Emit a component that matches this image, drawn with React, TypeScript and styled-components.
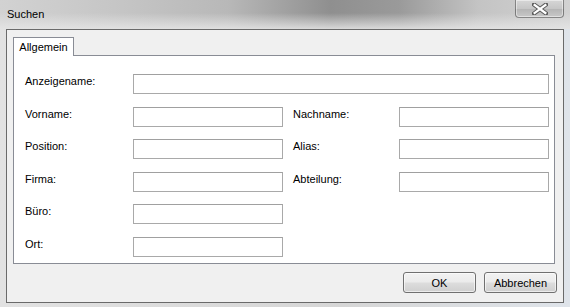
import React from "react";
import styled, { createGlobalStyle } from "styled-components";

const Global = createGlobalStyle`
  html, body { margin: 0; padding: 0; background: #d8d8d8; }
  body { font-family: "Liberation Sans", Arial, sans-serif; font-size: 11px; color: #000; }
  * { box-sizing: border-box; }
`;

const Window = styled.div`
  width: 570px;
  height: 307px;
  display: flex;
  flex-direction: column;
  background: linear-gradient(to right, #e2e2e2 0%, #d6d6d6 60%, #dfe4ea 100%);
  overflow: hidden;
`;

const TitleBar = styled.div`
  height: 29px;
  flex: none;
  display: flex;
  justify-content: space-between;
  align-items: flex-start;
  padding: 0 6px 0 7px;
  background:
    linear-gradient(to bottom, rgba(255,255,255,0) 0%, rgba(255,255,255,0) 45%, rgba(230,230,230,0.85) 100%),
    linear-gradient(to right, #d2d2d2 0%, #c6c6c6 20%, #b8b8b8 40%, #8f8f8f 58%, #9a9a9a 70%, #c4c4c4 84%, #d2d2d2 100%);
`;

const Title = styled.span`
  margin-top: 8px;
  font-size: 11px;
  line-height: 13px;
  color: #000;
`;

const CloseButton = styled.div`
  width: 49px;
  height: 18px;
  display: flex;
  align-items: center;
  justify-content: center;
  border: 1px solid rgba(70, 70, 70, 0.55);
  border-top: none;
  border-radius: 0 0 4px 4px;
  background: linear-gradient(to bottom, #d6d6d6 0%, #c6c6c6 50%, #b4b4b4 52%, #c8c8c8 100%);
  box-shadow: inset 0 0 0 1px rgba(255, 255, 255, 0.45);
`;

const Client = styled.div`
  flex: 1;
  margin: 0 6px 4px 6px;
  border: 1px solid #6a6a6a;
  background: #f0f0f0;
  padding: 7px 6px 9px 6px;
  display: flex;
  flex-direction: column;
`;

const TabStrip = styled.div`
  height: 18px;
  display: flex;
  align-items: flex-end;
`;

const Tab = styled.div<{ $active?: boolean }>`
  width: 61px;
  height: 19px;
  margin-bottom: -1px;
  display: flex;
  align-items: center;
  justify-content: center;
  border: 1px solid #898c95;
  border-bottom: none;
  background: ${(p) => (p.$active ? "#ffffff" : "#ececec")};
  position: relative;
  z-index: 1;
  white-space: nowrap;
`;

const Panel = styled.div`
  height: 209px;
  margin-right: 2px;
  border: 1px solid #898c95;
  background: #fff;
  padding: 18px 0 0 11px;
`;

const Form = styled.div`
  display: grid;
  grid-template-columns: 108px 150px 10px 106px 150px;
  grid-template-rows: repeat(6, 20px);
  row-gap: 12.6px;
`;

const Label = styled.label<{ $col?: number }>`
  grid-column: ${(p) => p.$col ?? 1};
  line-height: 14px;
  padding-top: 0;
  white-space: nowrap;
`;

const Field = styled.div<{ $col: number; $span?: number }>`
  grid-column: ${(p) => p.$col} / span ${(p) => p.$span ?? 1};
  height: 20px;
  border: 1px solid #a9a9a9;
  border-top-color: #a0a0a0;
  background: #fff;
`;

const Footer = styled.div`
  margin-top: 8px;
  display: flex;
  justify-content: flex-end;
  gap: 8px;
  margin-right: 0;
`;

const Button = styled.div`
  width: 73px;
  height: 21px;
  display: flex;
  align-items: center;
  justify-content: center;
  border: 1px solid #707070;
  border-radius: 3px;
  background: linear-gradient(to bottom, #f2f2f2 0%, #ebebeb 48%, #dddddd 52%, #cfcfcf 100%);
  box-shadow: inset 0 0 0 1px rgba(255, 255, 255, 0.6);
  font-size: 11px;
`;

const CloseX = () => (
  <svg width="16" height="12" viewBox="0 0 16 12">
    <path
      d="M2 1.5 L14 10.5 M14 1.5 L2 10.5"
      stroke="#5a5a5a"
      strokeWidth="4.2"
      strokeLinecap="square"
      fill="none"
    />
    <path
      d="M2.6 2 L13.4 10 M13.4 2 L2.6 10"
      stroke="#ffffff"
      strokeWidth="2.2"
      strokeLinecap="square"
      fill="none"
    />
  </svg>
);

export default function App() {
  return (
    <>
      <Global />
      <Window>
        <TitleBar>
          <Title>Suchen</Title>
          <CloseButton>
            <CloseX />
          </CloseButton>
        </TitleBar>
        <Client>
          <TabStrip>
            <Tab $active>Allgemein</Tab>
          </TabStrip>
          <Panel>
            <Form>
              <Label>Anzeigename:</Label>
              <Field $col={2} $span={4} />

              <Label>Vorname:</Label>
              <Field $col={2} />
              <Label $col={4}>Nachname:</Label>
              <Field $col={5} />

              <Label>Position:</Label>
              <Field $col={2} />
              <Label $col={4}>Alias:</Label>
              <Field $col={5} />

              <Label>Firma:</Label>
              <Field $col={2} />
              <Label $col={4}>Abteilung:</Label>
              <Field $col={5} />

              <Label>Büro:</Label>
              <Field $col={2} />

              <Label>Ort:</Label>
              <Field $col={2} />
            </Form>
          </Panel>
          <Footer>
            <Button>OK</Button>
            <Button>Abbrechen</Button>
          </Footer>
        </Client>
      </Window>
    </>
  );
}
